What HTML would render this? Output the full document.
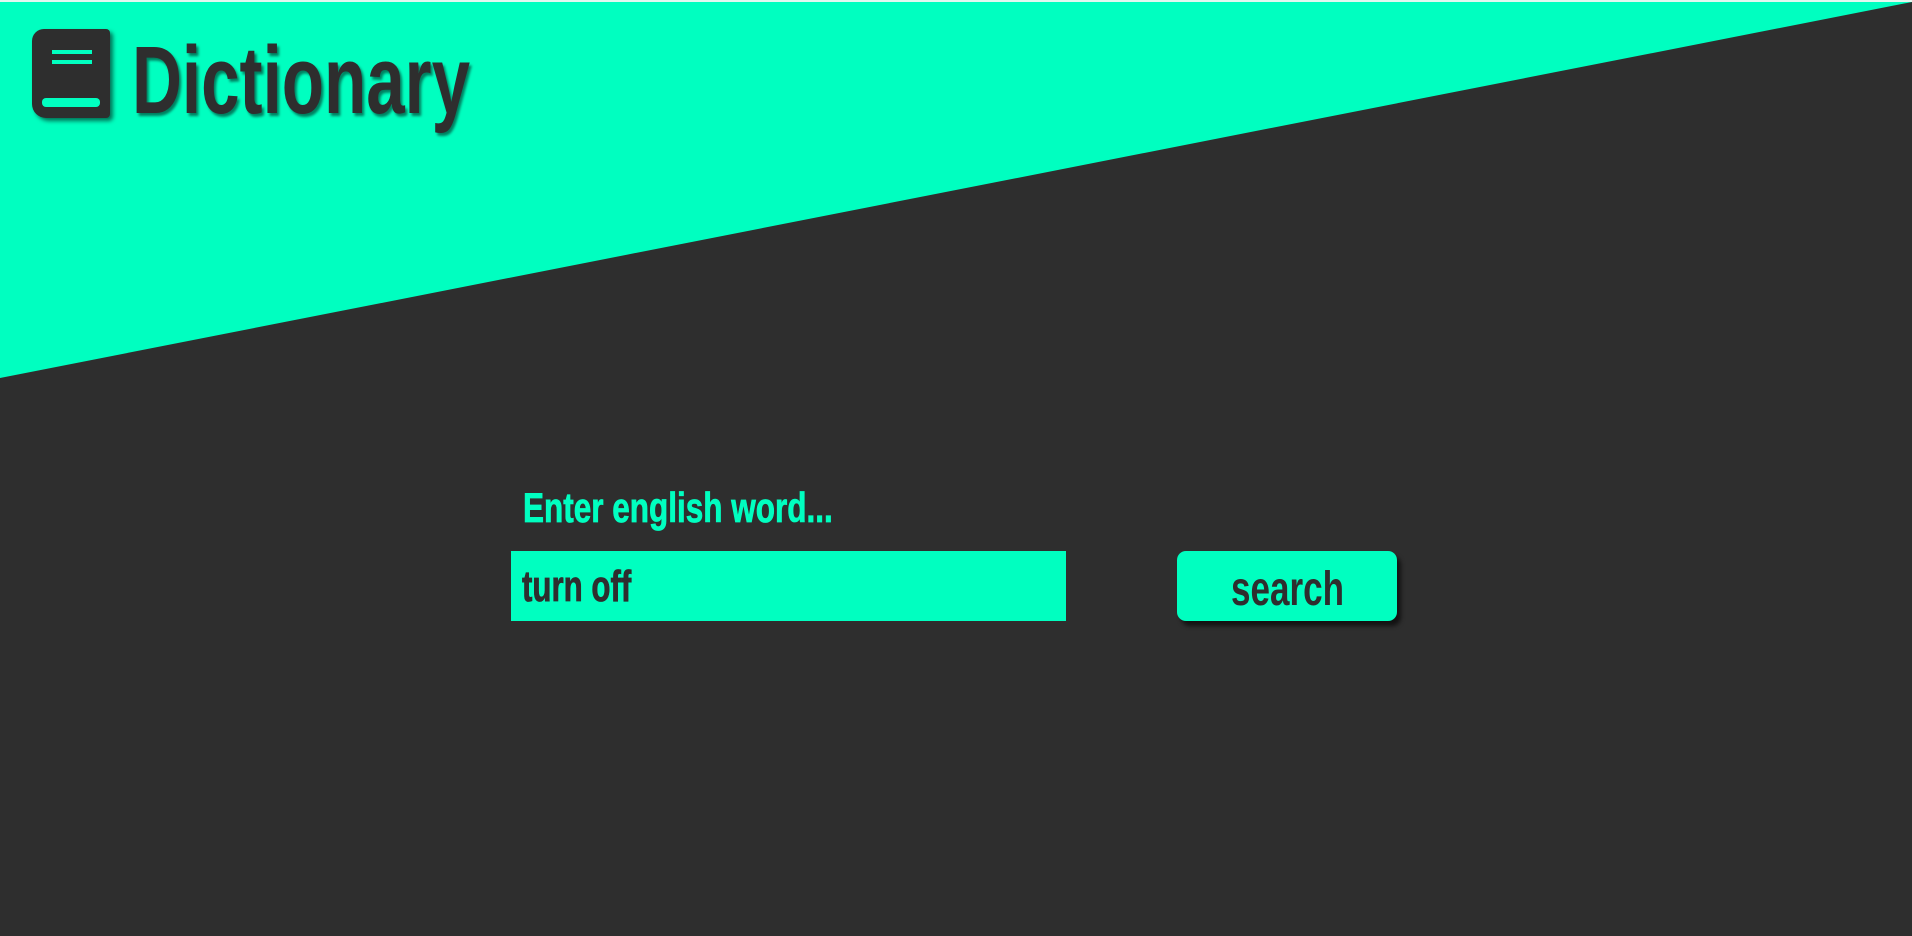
<!DOCTYPE html>
<html><head><style>
html,body{margin:0;padding:0;}
body{width:1912px;height:936px;background:#2e2e2e;position:relative;overflow:hidden;font-family:"Liberation Sans Narrow","Liberation Sans",sans-serif;font-weight:bold;}
.strip{position:absolute;left:0;top:0;width:1912px;height:2px;background:#e3f7f0;}
svg.bg{position:absolute;left:0;top:0;}
.t{position:absolute;white-space:nowrap;transform-origin:0 0;}
</style></head><body>
<svg class="bg" width="1912" height="936"><polygon points="0,2 1912,2 0,378" fill="#00ffc0"/></svg>
<div class="strip"></div>
<svg style="position:absolute;left:30px;top:28px;filter:drop-shadow(3px 3px 2px rgba(0,0,0,.55))" width="84" height="96" viewBox="0 0 84 96">
<path d="M14 1 H76 a4 4 0 0 1 4 4 V86 a4 4 0 0 1 -4 4 H16 a14 14 0 0 1 -14 -14 V13 a12 12 0 0 1 12 -12 Z" fill="#2e2e2e"/>
<rect x="12" y="70" width="58" height="9" rx="4" fill="#00ffc0"/>
<rect x="22" y="22" width="40" height="4" fill="#00ffc0"/>
<rect x="22" y="32" width="40" height="4" fill="#00ffc0"/>
</svg>
<div class="t" style="left:132px;top:26px;font-size:96px;color:#2e2e2e;transform:scaleX(0.72);text-shadow:3px 3px 3px rgba(0,0,0,.5);">Dictionary</div>
<div class="t" style="left:523px;top:484px;font-size:42px;color:#00ffc0;transform:scaleX(0.75);-webkit-text-stroke:0.8px #00ffc0;">Enter english word...</div>
<div style="position:absolute;left:511px;top:551px;width:555px;height:70px;background:#00ffc0;"></div>
<div class="t" style="left:522px;top:562px;font-size:44px;color:#2e2e2e;transform:scaleX(0.71);-webkit-text-stroke:0.8px #2e2e2e;">turn off</div>
<div style="position:absolute;left:1177px;top:551px;width:220px;height:70px;background:#00ffc0;border-radius:9px;box-shadow:4px 5px 4px rgba(0,0,0,.6);"></div>
<div class="t" style="left:1231px;top:562px;font-size:48px;color:#2e2e2e;transform:scaleX(0.73);">search</div>
</body></html>
